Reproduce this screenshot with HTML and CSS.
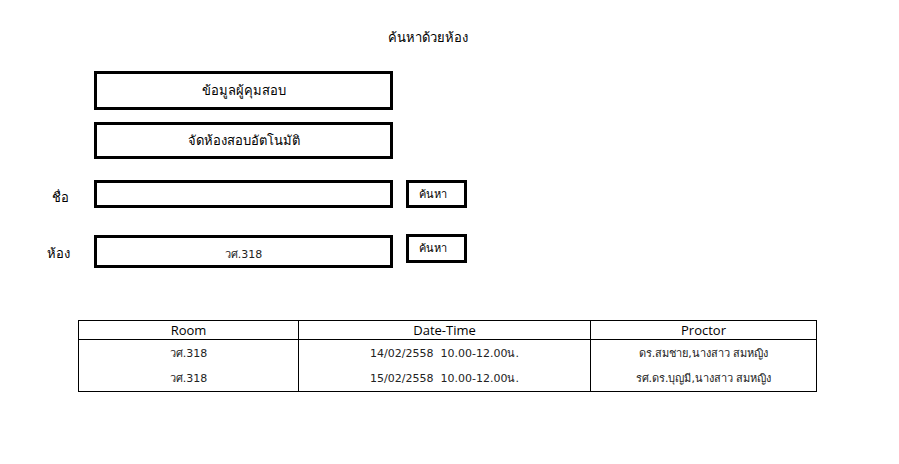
FILE: index.html
```html
<!DOCTYPE html>
<html>
	<head>
		<meta charset="utf-8">
		<title>ค้นหาด้วยห้อง</title>
		<link rel="stylesheet" href="styles.css">
	</head>
	<body>
		<div class="title">ค้นหาด้วยห้อง</div>
		<div class="form">
			<div class="label"></div>
			<div class="box big">ข้อมูลผู้คุมสอบ</div>
			<div></div>

			<div class="label"></div>
			<div class="box big second">จัดห้องสอบอัตโนมัติ</div>
			<div></div>

			<div class="label name">ชื่อ</div>
			<div class="box field"></div>
			<div class="box btn">ค้นหา</div>

			<div class="label room">ห้อง</div>
			<div class="box field roomfield">วศ.318</div>
			<div class="box btn roombtn">ค้นหา</div>
		</div>
		<table class="result">
			<tr>
				<th class="c1">Room</th>
				<th class="c2">Date-Time</th>
				<th class="c3">Proctor</th>
			</tr>
			<tr>
				<td>วศ.318</td>
				<td>14/02/2558&nbsp; 10.00-12.00น.</td>
				<td>ดร.สมชาย,นางสาว สมหญิง</td>
			</tr>
			<tr>
				<td>วศ.318</td>
				<td>15/02/2558&nbsp; 10.00-12.00น.</td>
				<td>รศ.ดร.บุญมี,นางสาว สมหญิง</td>
			</tr>
		</table>
	</body>
</html>
```

FILE: styles.css
```css
* {box-sizing: border-box}
html, body {margin: 0; padding: 0; background: #fff;}
body {
	font-family: Tahoma, "DejaVu Sans", sans-serif;
	font-size: 13px;
	color: #000;
}
.title {
	padding: 27px 0 0 388px;
	height: 71px;
}
.form {
	display: grid;
	grid-template-columns: 81px 299px 61px;
	column-gap: 13px;
	align-items: start;
}
.box {
	border: 3px solid #000;
	display: flex;
	align-items: center;
	justify-content: center;
}
.big {height: 39px; margin-bottom: 12px;}
.big.second {height: 37px; margin-bottom: 21px;}
.field {height: 28px;}
.btn {height: 28px; justify-content: flex-start; padding-left: 10px; font-size: 11px;}
.label {padding-left: 52px;}
.name {padding-top: 7px;}
.room {padding-top: 9px; padding-left: 47px; margin-top: 26px;}
.roomfield {height: 33px; margin-top: 27px; font-size: 11px; color: #222; padding-top: 4px;}
.roombtn {height: 29px; margin-top: 26px; padding-bottom: 2px;}
.result {
	margin: 52px 0 0 78px;
	width: 739px;
	border-collapse: collapse;
	border: 1px solid #000;
}
.result th {
	font-family: "Open Sans", sans-serif;
	font-weight: normal;
	font-size: 13px;
	height: 19px;
	padding: 0;
	border: 1px solid #000;
}
.result td {
	font-size: 11px;
	color: #222;
	text-align: center;
	height: 26px;
	padding: 0;
	border-left: 1px solid #000;
}
.c1 {width: 220px;}
.c2 {width: 292px;}
```
